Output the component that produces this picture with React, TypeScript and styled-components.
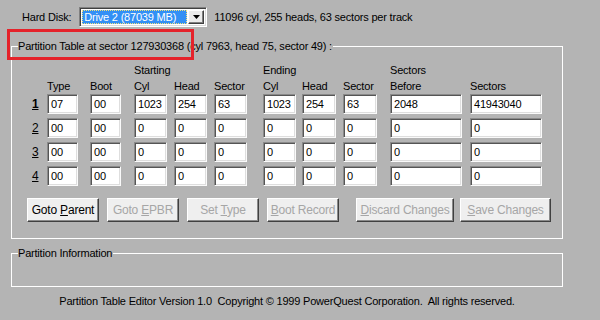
import React from "react";
import styled, { createGlobalStyle } from "styled-components";

const GlobalStyle = createGlobalStyle`
  html, body {
    margin: 0;
    padding: 0;
    background: #b4b4b4;
  }
  body {
    font-family: "Liberation Sans", Arial, sans-serif;
    font-size: 11px;
    color: #000;
  }
`;

const Window = styled.div`
  position: relative;
  width: 600px;
  height: 320px;
  background: #b4b4b4;
  display: flex;
  flex-direction: column;
  overflow: hidden;
  letter-spacing: -0.2px;
`;

const TopRow = styled.div`
  display: flex;
  align-items: center;
  height: 20px;
  margin-top: 7px;
  padding-left: 22px;
`;

const Label = styled.span`
  margin-right: 8px;
`;

const Combo = styled.div`
  display: flex;
  align-items: center;
  width: 128px;
  height: 20px;
  box-sizing: border-box;
  background: #fff;
  border-top: 1px solid #808080;
  border-left: 1px solid #808080;
  border-bottom: 1px solid #fff;
  border-right: 1px solid #fff;
  box-shadow: inset 1px 1px #404040, inset -1px -1px #dcdcdc;
  padding: 2px;
  margin-right: 7px;
`;

const ComboValue = styled.div`
  flex: 1;
  height: 100%;
  box-sizing: border-box;
  background: #3390f5;
  color: #fff;
  outline: 1px dotted #f5e27a;
  outline-offset: -1px;
  padding-left: 2px;
  display: flex;
  align-items: center;
  margin-right: 1px;
`;

const ComboButton = styled.div`
  width: 16px;
  height: 100%;
  box-sizing: border-box;
  background: #ececec;
  border-top: 1px solid #fff;
  border-left: 1px solid #fff;
  border-right: 1px solid #404040;
  border-bottom: 1px solid #404040;
  box-shadow: inset -1px -1px #808080;
  display: flex;
  align-items: center;
  justify-content: center;
`;

const GroupBox = styled.fieldset<{ $height: number; $top: number }>`
  margin: ${({ $top }) => $top}px 0 0 11px;
  width: 552px;
  height: ${({ $height }) => $height}px;
  box-sizing: border-box;
  border: 1px solid #fff;
  padding: 0;
  min-width: 0;
`;

const Legend = styled.legend`
  margin-left: 6px;
  padding: 0 1px 0 0;
  line-height: 14px;
`;

const GroupInner = styled.div`
  padding: 9px 0 0 19px;
`;

const cols = "16px 43px 44px 40px 40px 49px 39px 41px 47px 80px 72px";

const HeaderGrid = styled.div`
  display: grid;
  grid-template-columns: ${cols};
  grid-template-rows: 16px 16px;
  align-items: center;
  white-space: nowrap;
`;

const FieldGrid = styled.div`
  display: grid;
  grid-template-columns: ${cols};
  grid-auto-rows: 20px;
  row-gap: 4px;
  align-items: center;
`;

const RowLabel = styled.span<{ $bold?: boolean }>`
  text-decoration: underline;
  font-weight: ${({ $bold }) => ($bold ? "bold" : "normal")};
  font-size: 12px;
  padding-left: 1px;
`;

const Field = styled.div<{ $w: number }>`
  width: ${({ $w }) => $w}px;
  height: 20px;
  box-sizing: border-box;
  background: #fff;
  border-top: 1px solid #8a8a8a;
  border-left: 1px solid #8a8a8a;
  border-bottom: 1px solid #fafafa;
  border-right: 1px solid #fafafa;
  box-shadow: inset 1px 1px #555, inset -1px -1px #dedede;
  padding: 0 3px;
  display: flex;
  align-items: center;
`;

const ButtonRow = styled.div`
  display: flex;
  margin: 12px 0 0 -4px;
`;

const Button = styled.div<{ $w: number; $gap: number; $disabled?: boolean }>`
  width: ${({ $w }) => $w}px;
  height: 24px;
  margin-right: ${({ $gap }) => $gap}px;
  box-sizing: border-box;
  background: #efefef;
  border-top: 1px solid #fff;
  border-left: 1px solid #fff;
  border-right: 1px solid #404040;
  border-bottom: 1px solid #404040;
  box-shadow: inset -1px -1px #8a8a8a;
  display: flex;
  align-items: center;
  justify-content: center;
  font-size: 12px;
  white-space: pre;
  color: ${({ $disabled }) => ($disabled ? "#a6a6a6" : "#000")};
`;

const Mnemonic = styled.u`
  text-decoration: underline;
`;

const Footer = styled.div`
  width: 552px;
  margin: 7px 0 0 11px;
  text-align: center;
  line-height: 14px;
  white-space: pre;
`;

const Annotation = styled.div`
  position: absolute;
  left: 7px;
  top: 29px;
  width: 187px;
  height: 31px;
  box-sizing: border-box;
  border: 3px solid #e5232b;
  pointer-events: none;
`;

const rows: string[][] = [
  ["07", "00", "1023", "254", "63", "1023", "254", "63", "2048", "41943040"],
  ["00", "00", "0", "0", "0", "0", "0", "0", "0", "0"],
  ["00", "00", "0", "0", "0", "0", "0", "0", "0", "0"],
  ["00", "00", "0", "0", "0", "0", "0", "0", "0", "0"],
];

const widths = [31, 31, 33, 33, 33, 33, 34, 34, 72, 72];

const topHeaders = ["", "", "", "Starting", "", "", "Ending", "", "", "Sectors", ""];
const subHeaders = ["", "Type", "Boot", "Cyl", "Head", "Sector", "Cyl", "Head", "Sector", "Before", "Sectors"];

const buttons = [
  { pre: "Goto ", key: "P", post: "arent", w: 72, gap: 8, disabled: false },
  { pre: "Goto ", key: "E", post: "PBR", w: 72, gap: 8, disabled: true },
  { pre: "Set ", key: "T", post: "ype", w: 72, gap: 8, disabled: true },
  { pre: "", key: "B", post: "oot Record", w: 72, gap: 17, disabled: true },
  { pre: "", key: "D", post: "iscard Changes", w: 98, gap: 6, disabled: true },
  { pre: "", key: "S", post: "ave Changes", w: 91, gap: 0, disabled: true },
];

const App: React.FC = () => {
  return (
    <Window>
      <GlobalStyle />
      <TopRow>
        <Label>Hard Disk:</Label>
        <Combo>
          <ComboValue>Drive 2 (87039 MB)</ComboValue>
          <ComboButton>
            <svg width="7" height="4" viewBox="0 0 7 4">
              <path d="M0 0h7L3.5 4z" fill="#000" />
            </svg>
          </ComboButton>
        </Combo>
        <span>11096 cyl, 255 heads, 63 sectors per track</span>
      </TopRow>

      <GroupBox $height={200} $top={12}>
        <Legend>Partition Table at sector 127930368 (cyl 7963, head 75, sector 49) :</Legend>
        <GroupInner>
          <HeaderGrid>
            {topHeaders.map((h, i) => (
              <span key={`t${i}`}>{h}</span>
            ))}
            {subHeaders.map((h, i) => (
              <span key={`s${i}`}>{h}</span>
            ))}
          </HeaderGrid>
          <FieldGrid>
            {rows.map((row, r) => (
              <React.Fragment key={r}>
                <RowLabel $bold={r === 0}>{r + 1}</RowLabel>
                {row.map((v, c) => (
                  <Field key={c} $w={widths[c]}>
                    {v}
                  </Field>
                ))}
              </React.Fragment>
            ))}
          </FieldGrid>
          <ButtonRow>
            {buttons.map(b => (
              <Button key={b.key} $w={b.w} $gap={b.gap} $disabled={b.disabled}>
                <span>
                  {b.pre}
                  <Mnemonic>{b.key}</Mnemonic>
                  {b.post}
                </span>
              </Button>
            ))}
          </ButtonRow>
        </GroupInner>
      </GroupBox>

      <GroupBox $height={41} $top={7}>
        <Legend>Partition Information</Legend>
      </GroupBox>

      <Footer>
        Partition Table Editor Version 1.0  Copyright © 1999 PowerQuest Corporation.  All rights reserved.
      </Footer>

      <Annotation />
    </Window>
  );
};

export default App;
